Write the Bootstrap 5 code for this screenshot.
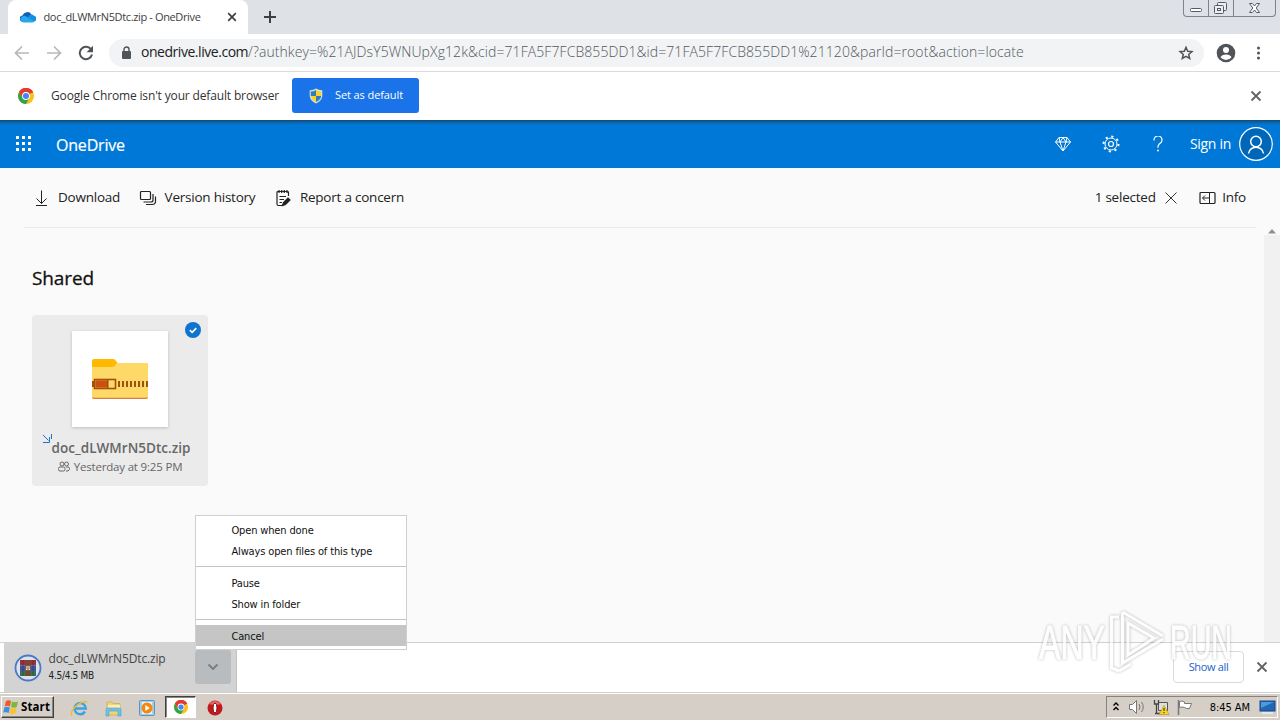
<!DOCTYPE html>
<html lang="en">
<head>
    <meta charset="UTF-8">
    <meta name="viewport" content="width=device-width, initial-scale=1.0">
    <title>doc_dLWMrN5Dtc.zip - OneDrive</title>
    <!-- Include Bootstrap CSS -->
    <link href="https://cdn.jsdelivr.net/npm/bootstrap@5.3.0/dist/css/bootstrap.min.css" rel="stylesheet">
    <style>
        body { height: 720px; width: 1280px; font-family: "Open Sans", "Noto Sans", sans-serif; background: #fafafa; color: #222; line-height: 1; }
        svg { display: block; flex: none; }
        .tahoma { font-family: "DejaVu Sans Condensed", "DejaVu Sans", sans-serif; font-stretch: condensed; }

        /* Browser window */
        .tab-strip { height: 34px; background: #dee1e6; padding-left: 8px; }
        .browser-tab { width: 240px; height: 34px; background: #fff; border-radius: 8px 8px 0 0; padding: 0 11px 0 12px; }
        .tab-title { font-size: 11px; letter-spacing: -.36px; color: #3c4043; margin: -1px 0 0 7.5px; }
        .win-controls { width: 93px; height: 17px; margin-right: 4px; border: 1px solid #7e838c; border-top: 0; border-radius: 0 0 4px 4px; }
        .win-controls > div { width: 25px; border-right: 1px solid #7e838c; }
        .win-controls > div:last-child { width: 41px; border: 0; }
        .toolbar { height: 38px; background: #fff; border-bottom: 1px solid #d8dadd; padding: 0 12px 0 14px; }
        .omnibox { width: 1095px; height: 28px; border-radius: 14px; background: #f1f3f4; margin-left: 15px; padding: 0 10px 0 12px; }
        .url { font-size: 14px; font-weight: 300; letter-spacing: .08px; color: #54585d; margin: -2px 0 0 9px; }
        .url b { font-weight: 400; letter-spacing: -.46px; color: #202124; }
        .infobar { height: 48px; background: #fff; padding: 0 18px 0 18px; }
        .infobar-text { font-size: 12px; letter-spacing: -.15px; margin-left: 17px; width: 241px; color: #333; }
        .btn-default-browser { width: 127px; height: 35px; margin-bottom: 1px; background: #1a73e8; color: #fff; border-radius: 3px; font-size: 11px; letter-spacing: -.1px; padding: 0 0 0 17px; }

        /* OneDrive page */
        .suite-bar { height: 48px; background: linear-gradient(#17486f, #0a62a6 2px, #0078d7 5px); color: #fff; padding: 0 7px 0 16px; }
        .suite-name { font-size: 16px; -webkit-text-stroke: .2px; letter-spacing: -.2px; margin: 1px 0 0 24px; }
        .sign-in { font-size: 14px; letter-spacing: -.3px; margin-left: 27px; }
        .header-icons { gap: 31px; }
        .help-icon { margin-left: 2px; }
        .command-bar { height: 60px; margin: 0 24px; border-bottom: 1px solid #ececec; font-size: 13.5px; letter-spacing: -.23px; padding: 0 10px 0 8px; }
        .cmd-text { margin-left: 6.5px; }
        .files { height: 414px; padding: 40px 0 0 32px; }
        .section-title { font-size: 19px; font-weight: 400; -webkit-text-stroke: .3px; color: #111; margin: 0; line-height: 20px; letter-spacing: -.1px; }
        .file-tile { width: 176px; height: 171px; background: #ebebeb; border-radius: 4px; margin-top: 27px; }
        .file-thumb { width: 96px; height: 96px; background: #fff; margin-top: 16px; box-shadow: 0 1px 3px rgba(0,0,0,.2); }
        .file-name { font-size: 13.5px; font-weight: 600; letter-spacing: .03px; color: #666; margin: 15px 0 0 2px; }
        .file-date { font-size: 11.5px; letter-spacing: -.18px; color: #666; margin-top: 5px; }
        .tile-check { top: 7px; right: 7px; }
        .tile-new { left: 10px; top: 119px; }
        .scroll-track { width: 16px; background: #f1f1f1; }
        .scroll-cap { width: 16px; height: 7px; background: #fafafa; }

        /* Download shelf */
        .shelf { height: 50px; background: #fff; border-top: 1px solid #d2d2d2; padding: 0 12px 0 4px; }
        .shelf-item { width: 233px; height: 49px; background: #d3d3d3; border-right: 1px solid #c3c3c3; padding: 0 5px 0 10px; }
        .shelf-label { margin: -1px 0 0 6.5px; }
        .shelf-name { font-size: 12px; letter-spacing: -.15px; color: #454545; }
        .shelf-size { font-size: 10px; letter-spacing: -.3px; color: #222; margin-top: 6px; }
        .shelf-arrow { width: 36px; height: 34px; margin-bottom: 2px; border-radius: 3px; background: #b9bcbe; }
        .btn-show-all { width: 71px; height: 32px; margin-bottom: 2px; border: 1px solid #d8dadf; border-radius: 4px; background: #fff; color: #1a62c5; font-size: 11px; letter-spacing: -.35px; padding: 1px 0 0; }
        .shelf-close { margin: -2px 0 0 12px; }
        .shelf-menu { left: 195px; top: 515px; width: 212px; height: 135px; background: #fff; border: 1px solid #cfcfcf; font-size: 11px; letter-spacing: -.14px; color: #111; padding-top: 4px; z-index: 5; }
        .shelf-menu div { height: 21px; line-height: 21px; padding-left: 35.4px; }
        .shelf-menu hr { margin: 4px 0 6px; border-color: #c4c4c4; opacity: 1; }
        .shelf-menu hr:last-of-type { margin-bottom: 5px; }
        .shelf-menu .picked { background: #c5c5c5; line-height: 23px; }

        /* Taskbar */
        .taskbar { height: 28px; background: #d6cfc8; border-top: 1px solid #d2cdc7; box-shadow: inset 0 1px #fff; padding: 3px 2px 1px 1px; }
        .start-btn { width: 53px; height: 22px; border: 1px solid; border-color: #fff #404040 #404040 #fff; box-shadow: inset -1px -1px #8b8682; font-size: 11.5px; font-weight: 700; letter-spacing: .1px; color: #000; padding-left: 1px; }
        .task-on { width: 31px; height: 22px; background: #fff; border: 1px solid; border-color: #404040 #fff #fff #404040; box-shadow: inset 1px 1px #8b8682; margin: 0 1px 0 9px; }
        .tray { width: 172px; height: 22px; border: 1px solid; border-color: #88827d #fff #fff #88827d; font-size: 11px; letter-spacing: -.05px; color: #000; padding: 0 1px 0 5px; }
        .watermark { left: 1031px; top: 600px; z-index: 6; pointer-events: none; filter: drop-shadow(0 0 1.7px rgba(0,0,0,.36)); opacity: .75; }
    </style>
</head>
<body class="d-flex flex-column overflow-hidden position-relative">
    <!-- Tab strip -->
    <div class="tab-strip d-flex">
        <div class="browser-tab d-flex align-items-center">
            <svg width="16" height="12" viewBox="0 0 16 12"><path d="M3 10.5A3 3 0 0 1 2.500 4.500 5 5 0 0 1 11.500 3.500L10 8Z" fill="#0f5fb8"/><path d="M6 10 8.500 5a3.600 3.600 0 0 1 5.500-.3 3 3 0 0 1 1 5.500Z" fill="#1490df"/><path d="M.3 7.500Q2 4 5.500 5l9 5.500q-1 1-2 1H3.500Q.5 11 .3 7.500Z" fill="#28a8ea"/></svg>
            <span class="tab-title text-nowrap">doc_dLWMrN5Dtc.zip - OneDrive</span>
            <svg class="ms-auto" width="10" height="10" viewBox="0 0 10 10"><path d="M1.200 1.200 8.800 8.800M8.800 1.200 1.200 8.800" stroke="#3c4043" stroke-width="1.700"/></svg>
        </div>
        <svg class="ms-3 mt-2" width="12" height="18" viewBox="0 0 12 18"><path d="M6 3v12M0 9h12" stroke="#3c4043" stroke-width="2"/></svg>
        <div class="win-controls d-flex ms-auto">
            <div><svg width="24" height="16"><rect x="6.500" y="8.500" width="11" height="3" rx="1" fill="#fff" stroke="#555b66"/></svg></div>
            <div><svg width="24" height="16" fill="#eceef1" stroke="#555b66"><rect x="8.500" y="2.500" width="9" height="8" rx="1"/><rect x="5.500" y="5.500" width="9" height="8" rx="1"/><rect x="8.500" y="8.500" width="3" height="2"/></svg></div>
            <div><svg width="41" height="16"><path d="m15.500 3.500h3l2 2.500 2-2.500h3l-3.300 4.500 3.300 4.500h-3l-2-2.500-2 2.500h-3l3.300-4.500Z" fill="#fff" stroke="#555b66"/></svg></div>
        </div>
    </div>

    <!-- Address bar -->
    <div class="toolbar d-flex align-items-center">
        <svg width="16" height="16" viewBox="0 0 16 16" fill="none" stroke="#b6b8bb" stroke-width="1.700"><path d="M15 8H2M8 1.500 1.500 8 8 14.500"/></svg>
        <svg class="ms-3" width="16" height="16" viewBox="0 0 16 16" fill="none" stroke="#b6b8bb" stroke-width="1.700"><path d="M1 8h13M8 1.500 14.500 8 8 14.500"/></svg>
        <svg class="ms-3" width="16" height="16" viewBox="0 0 16 16"><path d="M13.300 4.800A6.200 6.200 0 1 0 14 9.500" fill="none" stroke="#505458" stroke-width="2"/><path d="M15 .8v6.400H8.600Z" fill="#505458"/></svg>
        <div class="omnibox d-flex align-items-center">
            <svg width="11" height="14" viewBox="0 0 11 14"><rect x="1" y="5" width="9" height="8" rx="1" fill="#505458"/><path d="M3 5.500V3.500a2.500 2.500 0 0 1 5 0v2" fill="none" stroke="#505458" stroke-width="1.400"/></svg>
            <span class="url text-nowrap"><b>onedrive.live.com</b>/?authkey=%21AJDsY5WNUpXg12k&amp;cid=71FA5F7FCB855DD1&amp;id=71FA5F7FCB855DD1%21120&amp;parId=root&amp;action=locate</span>
            <svg class="ms-auto" width="16" height="16" viewBox="0 0 16 16"><path d="m8 2.300 1.700 4 4.200.3-3.200 2.800 1 4.100L8 11.300l-3.700 2.200 1-4.100-3.200-2.800 4.200-.3Z" fill="none" stroke="#505458" stroke-width="1.500"/></svg>
        </div>
        <svg class="ms-auto" width="20" height="20" viewBox="0 0 20 20"><circle cx="10" cy="10" r="9.300" fill="#505458"/><circle cx="10" cy="7" r="3" fill="#fff"/><path d="M4.500 14.300Q6 11.500 10 11.500t5.500 2.800Q13.500 17 10 17t-5.500-2.700Z" fill="#fff"/></svg>
        <svg class="ms-3 me-1" width="12" height="16" viewBox="0 0 12 16" fill="#505458"><circle cx="6.500" cy="3" r="1.500"/><circle cx="6.500" cy="8" r="1.500"/><circle cx="6.500" cy="13" r="1.500"/></svg>
    </div>

    <!-- Default browser prompt -->
    <div class="infobar d-flex align-items-center">
        <svg width="16" height="16" viewBox="0 0 16 16"><use href="#chromeLogo"/></svg>
        <span class="infobar-text text-nowrap">Google Chrome isn't your default browser</span>
        <button class="btn btn-default-browser d-flex align-items-center border-0">
            <svg width="14" height="16" viewBox="0 0 14 16"><path d="M7 .5Q10 2.500 13.300 2.300V8Q13 13 7 15.500 1 13 .7 8V2.300Q4 2.500 7 .5Z" fill="#d5dfdf"/><path d="M7 2v6H1.800V3.500Q5 3.500 7 2Z" fill="#2f7fb5"/><path d="M7 2v6h5.200V3.500Q9 3.500 7 2Z" fill="#fbd12c"/><path d="M1.800 8H7v6Q2 11.500 1.800 8Z" fill="#fbd12c"/><path d="M12.200 8H7v6q5-2.500 5.200-6Z" fill="#2f7fb5"/></svg>
            <span class="ms-2 ps-1">Set as default</span>
        </button>
        <svg class="ms-auto" width="12" height="12" viewBox="0 0 12 12"><path d="m1.500 1.500 9 9m0-9-9 9" stroke="#5f6368" stroke-width="1.800"/></svg>
    </div>

    <!-- OneDrive header -->
    <header class="suite-bar d-flex align-items-center">
        <svg width="16" height="16" viewBox="0 0 16 16" fill="#fff"><path d="M0 0h3v3H0zM6 0h3v3H6zM12 0h3v3h-3zM0 6h3v3H0zM6 6h3v3H6zM12 6h3v3h-3zM0 12h3v3H0zM6 12h3v3H6zM12 12h3v3h-3z"/></svg>
        <span class="suite-name">OneDrive</span>
        <div class="d-flex align-items-center ms-auto">
            <div class="header-icons d-flex align-items-center">
                <svg width="16" height="16" viewBox="0 0 16 16" fill="none" stroke="#fff"><path d="M4 1.500h8L15.500 6 8 15 .5 6ZM.5 6h15M4 1.500 5 6l3 9 3-9 1-4.500M5 6l3-4.500L11 6"/></svg>
                <!-- Gear: toothed ring from a dashed circle -->
                <svg width="18" height="18" viewBox="0 0 18 18" fill="none" stroke="#fff"><circle cx="9" cy="9" r="2.500" stroke-width="1.200"/><circle cx="9" cy="9" r="6"/><circle cx="9" cy="9" r="7.500" stroke-width="2" stroke-dasharray="2.200 3.690"/></svg>
                <svg class="help-icon" width="10" height="16" viewBox="0 0 10 16"><path d="M1 4.500V4a4 4 0 1 1 6.500 3L6 8.300Q5 9.300 5 11v.8" fill="none" stroke="#fff" stroke-width="1.200"/><circle cx="5" cy="14.500" r=".9" fill="#fff"/></svg>
            </div>
            <span class="sign-in">Sign in</span>
            <svg class="ms-2" width="34" height="34" viewBox="0 0 34 34" fill="none" stroke="#fff"><circle cx="17" cy="17" r="16.300" fill="#0067b8" stroke-width="1.200"/><circle cx="17" cy="14.500" r="5.300" stroke-width="1.500"/><path d="M9.500 26.500a7.600 7.600 0 0 1 15 0" stroke-width="1.500"/></svg>
        </div>
    </header>

    <!-- Command bar -->
    <div class="command-bar d-flex align-items-center">
        <svg width="18" height="18" viewBox="0 0 18 18" fill="none" stroke="#222"><path d="M9.500 1.500v13M4.500 9.500l5 5 5-5M4 16.500h11"/></svg>
        <span class="ms-2">Download</span>
        <svg class="ms-3" width="22" height="18" viewBox="-3 0 22 18" fill="none" stroke="#222" stroke-width="1.200"><rect x="1.500" y="2.500" width="10" height="8" rx="1"/><path d="M4.500 13h7.500a2 2 0 0 0 2-2V5M7 15.500h6.500a3 3 0 0 0 3-3V7.500"/></svg>
        <span class="cmd-text">Version history</span>
        <svg class="ms-3" width="22" height="18" viewBox="-4 0 22 18" fill="none" stroke="#222" stroke-width="1.200"><path d="M13.500 7V3.500q0-1-1-1H3q-1 0-1 1V15q0 1.500 1.500 1.500H7M4 1v3m2.700-3v3m2.600-3v3M12 1v3M4.500 7.500H11M4.500 10.500H9M4.500 13.500H7"/><path d="m7.500 16.500 1-3L13 9l2 2-4.500 4.500Z" fill="#222"/></svg>
        <span class="cmd-text">Report a concern</span>
        <span class="ms-auto">1 selected</span>
        <svg class="ms-2" width="14" height="14" viewBox="0 0 14 14"><path d="m1.500 1.500 11 11m0-11-11 11" stroke="#333"/></svg>
        <svg class="ms-3" width="22" height="14" viewBox="-5 0 22 14" fill="none" stroke="#222"><rect x="1" y="1.500" width="15" height="11" rx="1" stroke-width="1.200"/><path d="M10.500 1.500v11M10 7H3.500M6 4.500 3.500 7 6 9.500"/></svg>
        <span class="cmd-text">Info</span>
    </div>

    <div class="d-flex">
        <main class="files flex-grow-1">
            <h1 class="section-title">Shared</h1>
            <div class="file-tile position-relative d-flex flex-column align-items-center">
                <svg class="tile-check position-absolute" width="16" height="16" viewBox="0 0 16 16"><circle cx="8" cy="8" r="8" fill="#0f74d0"/><path d="m4.800 8 2.300 2.300 4.200-4.200" fill="none" stroke="#fff" stroke-width="1.600"/></svg>
                <div class="file-thumb d-flex align-items-center justify-content-center">
                    <svg width="56" height="40" viewBox="0 0 56 40"><path d="M0 2q0-2 2-2h19q2 0 3 2l1.500 2H54q2 0 2 2v14H0Z" fill="#ffb900"/><path d="M0 8h20q2 0 3.500-2L25 4h29q2 0 2 2v32q0 2-2 2H2q-2 0-2-2Z" fill="#ffd967"/><path d="M0 37.500q0 2.500 2 2.500h52q2 0 2-2.500-.5 1.300-2 1.300H2Q.5 38.800 0 37.500Z" fill="#d67f3c"/><rect y="22" width="2" height="6" fill="#a55115"/><rect x="2.500" y="20.500" width="21" height="9" fill="#ffd967" stroke="#a0500f" stroke-width="1.600"/><rect x="3.300" y="21.300" width="12.500" height="7.400" fill="#ca5010"/><path d="M15.800 20v10" stroke="#a0500f" stroke-width="1.500"/><path d="M26 25h30" stroke="#a0500f" stroke-width="6" stroke-dasharray="2 2"/></svg>
                </div>
                <svg class="tile-new position-absolute" width="10" height="9" viewBox="0 0 10 9" fill="none" stroke="#1b74cc"><path d="m1 1 5.500 5.500M1 8.500h6.500V3M9.500 0v5"/></svg>
                <div class="file-name text-nowrap">doc_dLWMrN5Dtc.zip</div>
                <div class="file-date d-flex align-items-center text-nowrap">
                    <svg class="me-1" width="12" height="11" viewBox="0 0 12 11" fill="none" stroke="#666"><circle cx="4" cy="3" r="2"/><circle cx="8.500" cy="3" r="2"/><rect x=".5" y="6" width="6.500" height="4" rx="1.500"/><path d="M8 6h2q1.500 0 1.500 1.500T10 10H8"/></svg>
                    <span>Yesterday at 9:25 PM</span>
                </div>
            </div>
        </main>
        <div>
            <div class="scroll-cap"><svg width="16" height="7" viewBox="0 0 16 7"><path d="M4 5.500 8 1l4 4.500Z" fill="#909090"/></svg></div>
            <div class="scroll-track h-100"></div>
        </div>
    </div>

    <!-- Downloads -->
    <div class="shelf d-flex position-relative">
        <div class="shelf-item d-flex align-items-center">
            <svg width="28" height="28" viewBox="0 0 28 28"><circle cx="14" cy="14" r="12.500" fill="#dce2ec" stroke="#4a78c8" stroke-width="1.800"/><path d="M6 6h16v5.500H6z" fill="#9d3139"/><path d="M6 11.500h16V17H6z" fill="#3d55a5"/><path d="M6 17h16v5H6z" fill="#35774b"/><path d="M9 6v16M19 6v16" stroke="#2d2f42" stroke-opacity=".5"/><path d="M11.500 6h5v16h-5z" fill="#7a4630"/><rect x="11.500" y="11.500" width="5" height="5" fill="#eee" stroke="#6b5d55"/><path d="M13 12v3h2v-3" fill="none" stroke="#a35a3b"/></svg>
            <div class="shelf-label">
                <div class="shelf-name">doc_dLWMrN5Dtc.zip</div>
                <div class="shelf-size tahoma">4.5/4.5 MB</div>
            </div>
            <div class="shelf-arrow ms-auto d-flex align-items-center justify-content-center">
                <svg width="12" height="8" viewBox="0 0 12 8"><path d="m1.500 1.500 4.500 4.500 4.500-4.500" fill="none" stroke="#777c80" stroke-width="1.800"/></svg>
            </div>
        </div>
        <div class="d-flex align-items-center ms-auto">
            <button class="btn btn-show-all">Show all</button>
            <svg class="shelf-close" width="12" height="12" viewBox="0 0 12 12"><path d="m1.500 1.500 9 9m0-9-9 9" stroke="#5f6368" stroke-width="1.800"/></svg>
        </div>
    </div>

    <!-- Taskbar -->
    <div class="taskbar d-flex position-relative">
        <div class="start-btn d-flex align-items-center">
            <svg width="18" height="16" viewBox="0 0 18 16"><path d="M3 2q3-1.500 5 0L7 7.500q-2.500-1.500-5.300-.3Z" fill="#ec5b29"/><path d="M9 2.500q3 1.500 6 0L13.700 8q-2.700 1.500-5.700 0Z" fill="#7cb83b"/><path d="M1.500 8.200q2.700-1.200 5.300.3L5.700 14q-2.500-1.500-5.500-.4Z" fill="#3f8fdd"/><path d="M7.800 9q3 1.500 5.700 0l-1.300 5.300q-2.700 1.500-5.700 0Z" fill="#fcc321"/></svg>
            <span>Start</span>
        </div>
        <svg class="ms-3 mt-1" width="19" height="17" viewBox="0 0 19 17"><path d="M15 11.500a5.600 5.600 0 1 1 .8-3H5.500" fill="none" stroke="#3ba3df" stroke-width="2.500"/><path d="M2 15.500Q-.5 13 5 7 12 .5 17.500 2" fill="none" stroke="#e9bc3c" stroke-width="1.500"/></svg>
        <svg class="ms-3 mt-1" width="17" height="17" viewBox="0 0 17 17"><path d="M2 2h5l1 1.500h7V15H2Z" fill="#f0d578" stroke="#c9a94b" stroke-width=".7"/><path d="M3 5h12v4H3z" fill="#f9eeb8"/><path d="M1 16V9.500Q1 8 3 8h11q2 0 2 1.500V16h-3v-5H4v5Z" fill="#71c3e4" stroke="#4f9fc4" stroke-width=".6"/></svg>
        <svg class="ms-3 mt-1" width="18" height="17" viewBox="-1 0 18 17"><rect x=".5" y=".5" width="15" height="15" rx="1" fill="#9ed0ee" stroke="#5b93bc"/><rect x="3" y="2" width="10" height="12" fill="#eaf2f8"/><circle cx="8" cy="8" r="5.500" fill="#f4870f"/><path d="m6.300 5 4.500 3-4.500 3Z" fill="#fff"/></svg>
        <div class="task-on d-flex align-items-center justify-content-center"><svg width="14" height="14" viewBox="0 0 16 16"><use href="#chromeLogo"/></svg></div>
        <svg class="mt-1 ms-2" width="19" height="16" viewBox="-2 0 19 16"><circle cx="8" cy="8" r="7.500" fill="#c11a1d"/><path d="M2 4a7.500 7.500 0 0 1 12 0Q8 6 2 4Z" fill="#e56362"/><ellipse cx="8" cy="8" rx="2" ry="5" fill="#fff" stroke="#7f1012"/></svg>
        <div class="tray tahoma ms-auto d-flex align-items-center">
            <svg width="8" height="12" viewBox="0 0 8 12" fill="none" stroke="#000" stroke-width="1.400"><path d="m1.500 4.500 2.500-2.500 2.500 2.500m-5 4.500L4 6.500 6.500 9"/></svg>
            <svg class="ms-2" width="17" height="16" viewBox="0 0 17 16" fill="none" stroke="#777"><path d="M1.500 5.500h3l4-4v13l-4-4h-3Z" fill="#fff"/><path d="M11 5q2 3 0 6M13.500 3q3.500 5 0 10"/></svg>
            <svg class="ms-2" width="17" height="16" viewBox="0 0 17 16"><path d="M5.500 3.500h9v8h-9z" fill="#d9e0df" stroke="#555"/><path d="M1.500 1v4h4V1M3.500 5v9M2 14.500h7" fill="none" stroke="#444" stroke-width="1.300"/><path d="m11 6.500 5 9H6Z" fill="#ffd42a" stroke="#b78f00" stroke-width=".6"/><path d="M11 9v3m0 1v1.300" stroke="#222"/></svg>
            <svg class="ms-1" width="20" height="16" viewBox="-2 0 20 16"><path d="M2.500 1v15" stroke="#777" stroke-width="1.500"/><path d="M3.500 2.500q3-1 5 .5v1.500h7l-2 5q-3 .5-5-1-2-1-5 0Z" fill="#fff" stroke="#777"/></svg>
            <span class="ms-auto">8:45 AM</span>
            <svg class="ms-2" width="18" height="16" viewBox="-2 0 18 16"><rect x="0" y="2" width="15" height="10" fill="#2267b3" stroke="#15478a"/><path d="M1 3h13L1 9Z" fill="#4c9add"/><path d="M2 14h11" stroke="#e8f0f4" stroke-width="1.500"/></svg>
        </div>
    </div>

    <!-- Download item menu -->
    <div class="shelf-menu tahoma position-absolute">
        <div>Open when done</div>
        <div>Always open files of this type</div>
        <hr>
        <div>Pause</div>
        <div>Show in folder</div>
        <hr>
        <div class="picked">Cancel</div>
    </div>

    <!-- Watermark -->
    <svg class="watermark overflow-visible position-absolute" width="220" height="84" viewBox="0 0 220 84">
        <g fill="#fff" stroke="#fff" font-family="Liberation Sans, sans-serif" font-size="49">
            <text x="8" y="59" textLength="66" lengthAdjust="spacingAndGlyphs">ANY</text>
            <text x="139" y="59" textLength="62" lengthAdjust="spacingAndGlyphs">RUN</text>
        </g>
        <path d="M88 17H80.500V68L88 71M91.500 12V63L132 39M91.500 12 132 36M97 23l26 15-26 17ZM88 71l12-7" fill="none" stroke="#fff" stroke-width="3"/>
    </svg>

    <svg width="0" height="0" class="position-absolute">
        <defs>
            <g id="chromeLogo"><circle cx="8" cy="8" r="8" fill="#fbc116"/><path d="M8 8 1.100 4A8 8 0 0 1 15 4Z" fill="#e33b2e"/><path d="M1.100 4A8 8 0 0 0 8 16l3.500-6L8 8 4.600 10Z" fill="#2da44e"/><path d="M8 4.400h7.200A8 8 0 0 0 1.100 4L4.600 10Z" fill="#e33b2e"/><circle cx="8" cy="8" r="3.900" fill="#fff"/><circle cx="8" cy="8" r="3" fill="#4285f4"/></g>
        </defs>
    </svg>
<script src="https://cdn.jsdelivr.net/npm/bootstrap@5.3.0/dist/js/bootstrap.bundle.min.js"></script>
</body>
</html>
